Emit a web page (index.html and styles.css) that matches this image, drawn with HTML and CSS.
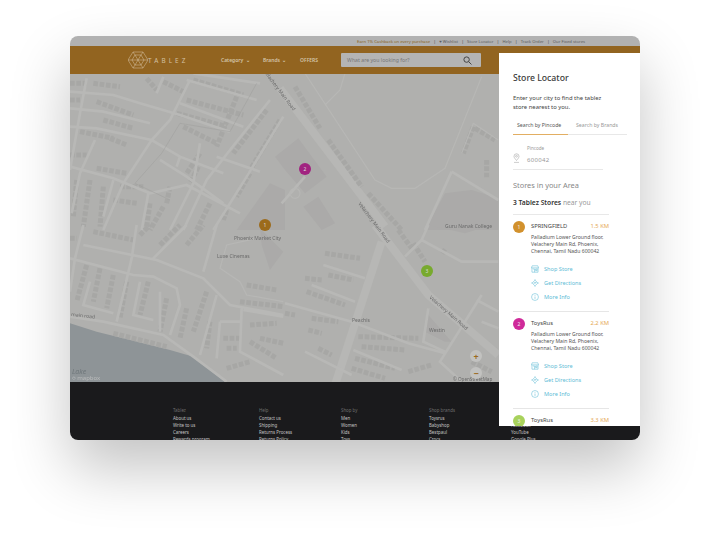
FILE: index.html
```html
<!DOCTYPE html>
<html lang="en">
<head>
  <meta charset="UTF-8" />
  <title>Tablez - Store Locator</title>
  <link rel="stylesheet" href="styles.css">
</head>
<body>
  <div class="card">
    <div class="topbar">
      <span class="cashback">Earn 1% Cashback on every purchase</span><i>|</i>
      <span>&#9829; Wishlist</span><i>|</i>
      <span>Store Locator</span><i>|</i>
      <span>Help</span><i>|</i>
      <span>Track Order</span><i>|</i>
      <span>Our Fixed stores</span>
    </div>

    <header class="nav">
      <svg class="logo" viewBox="0 0 20 18" fill="none" stroke="#d8c7a8" stroke-width=".5">
        <path d="M5 1h10l5 8-5 8H5L0 9z" />
        <path d="M7 4h6l3 5-3 5H7L4 9z" />
        <path d="M5 1l2 3M15 1l-2 3M20 9h-4M15 17l-2-3M5 17l2-3M0 9h4M7 4l6 10M13 4L7 14M4 9h12" />
      </svg>
      <span class="brand">TABLEZ</span>
      <ul class="menu">
        <li class="cat">Category <small>&#8964;</small></li>
        <li class="brd">Brands <small>&#8964;</small></li>
        <li>OFFERS</li>
      </ul>
      <div class="search">
        <span>What are you looking for?</span>
        <svg width="9" height="9" viewBox="0 0 10 10" fill="none" stroke="#444" stroke-width="1.1"><circle cx="4" cy="4" r="3" /><path d="M6.2 6.2L9.4 9.4" /></svg>
      </div>
    </header>

    <div class="map">
      <svg class="mapart" viewBox="70 74 430 308">
        <!-- top left streets -->
        <g transform="translate(70 70) scale(.3333)">
          <path class="block" d="M0 40H50M70 40L150 50M230 25L260 60M280 35L340 65M370 30L520 75M350 90L520 135M320 130L470 170M0 90H30M80 95L190 135M100 150L190 175M30 185L130 205M120 205L170 225M0 255H50M80 295L170 310M340 170L440 220M390 250L350 310M500 80L440 230M590 120L490 250M630 150L540 300M540 310L500 380M385 290L360 340M300 350L290 400M20 330L10 440M60 330L40 470M100 350L90 470M150 350H220M130 390L200 400M240 400L230 470M280 410L240 480M420 400L380 480M470 420L460 450" />
          <path class="road" d="M0 65L130 75L210 100L330 135L480 185M0 115L100 125L240 160M0 170L80 175L245 210L330 260L460 310M0 290L130 325L240 370L350 345L510 430M270 270L350 320L460 400M50 25L30 130L0 300M75 210L30 310L5 430M360 30L300 150L245 210L160 340L100 480M280 20L260 70M130 330L100 440M235 370L215 480M390 220L370 340L300 480M600 90L480 240L410 330L340 480M640 140L530 320L430 480M330 100L520 170M350 30L560 90M370 10L570 40M330 260L320 290M440 260L570 305" />
          <path class="thin" d="M195 340L275 250L330 160L480 185L560 40M195 340L300 390" />
          <path class="lot" d="M600 340L645 360V480H500Z" />
        </g>
        <!-- park and mall -->
        <g transform="translate(285 70) scale(.3333)">
          <path class="lot" d="M40 205L125 320L60 370L0 300L-30 260ZM55 410L100 380L150 460L110 480ZM480 370L560 360L640 385V480H420Z" />
          <path class="main" d="M-15 55L300 470" />
          <path class="block" d="M30 50L105 175M130 210L230 350M250 370L350 480M565 170L535 250M570 175L630 210M605 270V325" />
          <path class="road" d="M500 305L640 390M500 305L420 480M60 320L-10 400" />
          <path class="thinlight" d="M60 10L270 330L320 355H390L480 295L590 20M120 105L165 60L180 10M565 160L530 250M565 160L640 210" />
          <circle class="thinlight" cx="30" cy="370" r="15" />
        </g>
        <!-- bottom left, lake shore -->
        <g transform="translate(70 225) scale(.3333)">
          <path class="water" d="M0 295L80 320L180 345L300 375L370 395L470 475H0Z" />
          <path class="lot" d="M570 10L640 80L600 135L575 60Z" />
          <path class="block" d="M70 20L190 45M210 30L240 0M270 60L330 0M350 60L400 0M0 40H20M50 120L20 230M90 130L70 230M130 150L110 250M170 170L150 280M235 170L210 270M290 220L270 320M350 250L330 340M410 200L370 320M420 290L410 370M130 325L290 365M460 340H510M470 370H500M540 350L620 400M570 340L640 355M470 430L540 410M510 230L640 245M530 180L620 195M540 300L620 295" />
          <path class="road" d="M0 100L190 150L250 155L320 190L330 240L300 330M40 60L260 105L400 160L480 240L640 270M40 0L15 100L0 200M200 0L185 100L140 290M350 0L250 100M440 0L400 140M440 210L390 390M0 275L100 290L280 330L370 395L470 470M270 200V320M210 170L190 270L250 285M60 170L40 240L130 265M450 290L440 400M515 250L510 380L640 450M450 290H510M520 255L640 275" />
          <path class="thinlight" d="M560 40L470 60L450 130L510 170L530 210L640 230" />
        </g>
        <!-- bottom right -->
        <g transform="translate(285 225) scale(.3333)">
          <path class="lot" d="M430 270L500 350L480 350L420 320ZM430 0L620 0L540 25Z" />
          <path class="main" d="M290 50L150 480" />
          <path class="main" d="M270 0L430 210L640 390" />
          <path class="block" d="M120 85L225 100M130 150L205 165M60 160L110 165M65 200L180 240M0 265L30 270M80 280L160 290M70 315L110 325M220 335L400 340M230 365L360 375M100 370L140 390M210 400L330 430M200 430L300 460M385 55L420 110M340 15L380 70M470 75L485 85M370 440L440 420M560 410L620 440" />
          <path class="road" d="M115 120L240 160M80 180L210 230M0 235L200 290L370 355L480 385M60 380L200 450M205 375L350 435M430 250L415 350L480 380M590 210L465 410L530 470M410 45L530 110H640M640 260L575 225M590 290L640 310M430 0L410 45L360 95" />
        </g>

        <g class="labels">
          <text transform="translate(293 111) rotate(53)" text-anchor="end">Velachery Main Road</text>
          <text transform="translate(358 204) rotate(53)">Velachery Main Road</text>
          <text transform="translate(429 298) rotate(41)">Velachery Main Road</text>
          <text x="445" y="228">Guru Nanak College</text>
          <text x="234" y="240">Phoenix Market City</text>
          <text x="217" y="258">Luxe Cinemas</text>
          <text x="352" y="322">Peachis</text>
          <text x="429" y="332">Westin</text>
          <text transform="translate(71 316) rotate(6)">main road</text>
          <text class="lake" x="72" y="374">Lake</text>
          <text class="credit" x="453" y="381">© OpenStreetMap</text>
        </g>
      </svg>

      <span class="pin pin-1">1</span>
      <span class="pin pin-2">2</span>
      <span class="pin pin-3">3</span>

      <div class="attrib"><b>&#9675;</b> mapbox</div>
      <div class="zoomctl">
        <span class="plus">+</span>
        <span class="minus">&#8722;</span>
      </div>
    </div>

    <footer class="foot">
      <div>
        <h5>Tablez</h5>
        <a>About us</a><a>Write to us</a><a>Careers</a><a>Rewards program</a>
      </div>
      <div>
        <h5>Help</h5>
        <a>Contact us</a><a>Shipping</a><a>Returns Process</a><a>Returns Policy</a>
      </div>
      <div>
        <h5>Shop by</h5>
        <a>Men</a><a>Women</a><a>Kids</a><a>Toys</a>
      </div>
      <div>
        <h5>Shop brands</h5>
        <a>Toysrus</a><a>Babyshop</a><a>Bestpaul</a><a>Crocs</a>
      </div>
      <div class="social">
        <a>Facebook</a><a>YouTube</a><a>Google Plus</a>
      </div>
    </footer>

    <aside class="panel">
      <h2>Store Locator</h2>
      <p class="intro">Enter your city to find the tablez store nearest to you.</p>
      <div class="tabs">
        <span class="on">Search by Pincode</span>
        <span>Search by Brands</span>
      </div>
      <div class="pincode">
        <svg width="7" height="10" viewBox="0 0 7 10" fill="none" stroke="#aaa" stroke-width=".6"><path d="M3.5 7.5C2 5.6 1 4.6 1 3.3a2.5 2.5 0 0 1 5 0C6 4.6 5 5.6 3.5 7.5z" /><circle cx="3.5" cy="3.3" r=".9" /><path d="M1 9.4h5" /></svg>
        <div>
          <label>Pincode</label>
          <div class="val">600042</div>
        </div>
      </div>
      <h3>Stores in your Area</h3>
      <p class="count"><b>3 Tablez Stores</b> near you</p>

      <div class="store">
        <span class="num num-1">1</span>
        <div class="store-body">
          <div class="store-head"><span>SPRINGFIELD</span><em>1.5 KM</em></div>
          <p>Palladium Lower Ground floor, Velachery Main Rd, Phoenix, Chennai, Tamil Nadu 600042</p>
          <ul class="links">
            <li><svg viewBox="0 0 10 10"><use href="#ic-shop" /></svg>Shop Store</li>
            <li><svg viewBox="0 0 10 10"><use href="#ic-dir" /></svg>Get Directions</li>
            <li><svg viewBox="0 0 10 10"><use href="#ic-info" /></svg>More Info</li>
          </ul>
        </div>
      </div>

      <div class="store">
        <span class="num num-2">2</span>
        <div class="store-body">
          <div class="store-head"><span>ToysRus</span><em>2.2 KM</em></div>
          <p>Palladium Lower Ground floor, Velachery Main Rd, Phoenix, Chennai, Tamil Nadu 600042</p>
          <ul class="links">
            <li><svg viewBox="0 0 10 10"><use href="#ic-shop" /></svg>Shop Store</li>
            <li><svg viewBox="0 0 10 10"><use href="#ic-dir" /></svg>Get Directions</li>
            <li><svg viewBox="0 0 10 10"><use href="#ic-info" /></svg>More Info</li>
          </ul>
        </div>
      </div>

      <div class="store">
        <span class="num num-3">3</span>
        <div class="store-body">
          <div class="store-head"><span>ToysRus</span><em>3.3 KM</em></div>
        </div>
      </div>
    </aside>
  </div>

  <svg class="defs" width="0" height="0">
    <symbol id="ic-shop" viewBox="0 0 10 10">
      <path d="M1.5 1h7l1 2.6H.5zM1.2 3.6V9h7.6V3.6M2.5 5h2v4M5.8 5h1.8v2H5.8z" />
    </symbol>
    <symbol id="ic-dir" viewBox="0 0 10 10">
      <path d="M5 1.4L8.6 5 5 8.6 1.4 5zM3.8 6V4.6h2.4M5.4 3.6l1 1-1 1M5 .2v1.2M5 8.6v1.2M.2 5h1.2M8.6 5h1.2" />
    </symbol>
    <symbol id="ic-info" viewBox="0 0 10 10">
      <circle cx="5" cy="5" r="4.3" />
      <path d="M5 4.4v3M5 2.6v.9" />
    </symbol>
  </svg>
</body>
</html>
```
FILE: styles.css
```css
body {
  margin: 0;
  min-height: 545px;
  background-color: #fff;
  font-family: "Noto Sans", "Open Sans", sans-serif;
  color: #333;
  overflow: hidden;
}

.card {
  position: relative;
  width: 570px;
  height: 404px;
  margin: 0 0 0 70px;
  top: 36px;
  border-radius: 8px;
  overflow: hidden;
  display: flex;
  flex-direction: column;
  box-shadow: 0 28px 60px rgba(0, 0, 0, .24);
}

.defs {
  position: absolute;
}

/* top strip */
.topbar {
  height: 10px;
  flex: none;
  background-color: #b1b1b1;
  display: flex;
  align-items: center;
  justify-content: flex-end;
  gap: 2.4px;
  padding-right: 55px;
  font-size: 4.2px;
  color: #5c5c5c;
  white-space: nowrap;
}

.topbar i {
  font-style: normal;
  margin: 0 1px;
  color: #444;
}

.cashback {
  color: #8a6420;
}

/* brown nav */
.nav {
  height: 28px;
  flex: none;
  background-color: #926420;
  display: flex;
  align-items: center;
  padding-left: 58px;
  color: #d4c4a9;
}

.logo {
  width: 20px;
  height: 18px;
}

.brand {
  width: 73px;
  font-size: 6.4px;
  letter-spacing: 3.1px;
  color: #d3c0a0;
}

.menu {
  list-style: none;
  display: flex;
  margin: 0;
  padding: 0;
  font-size: 5px;
  font-weight: 600;
}

.menu li {
  white-space: nowrap;
}

.menu .cat {
  width: 42px;
}

.menu .brd {
  width: 37px;
}

.menu small {
  font-size: 5px;
  margin-left: 1px;
}

.search {
  margin-left: 23px;
  width: 140px;
  height: 14px;
  box-sizing: border-box;
  padding: 0 9px 0 6px;
  background-color: #b4b4b4;
  border-radius: 1px;
  display: flex;
  align-items: center;
  justify-content: space-between;
  font-size: 5.2px;
  color: #777;
}

/* map */
.map {
  position: relative;
  height: 308px;
  flex: none;
  background-color: #b0b0ae;
  overflow: hidden;
}

.mapart {
  position: absolute;
  left: 0;
  top: 0;
  width: 430px;
  height: 308px;
  filter: blur(.5px);
}

.road {
  fill: none;
  stroke: #b8b8b6;
  stroke-width: 8;
}

.main {
  fill: none;
  stroke: #b7b7b5;
  stroke-width: 24;
}

.block {
  fill: none;
  stroke: #a7a7a5;
  stroke-width: 15;
  stroke-dasharray: 14 5;
}

.lot {
  fill: #abaaa9;
}

.water {
  fill: #8e9497;
}

.thin {
  fill: none;
  stroke: #9e9e9c;
  stroke-width: 1.5;
}

.thinlight {
  fill: none;
  stroke: #b7b7b5;
  stroke-width: 3.5;
}

.labels text {
  font-size: 5px;
  fill: #6a6a6a;
}

.labels .lake {
  font-size: 7px;
  font-style: italic;
  fill: #6f777b;
}

.labels .credit {
  font-size: 4.6px;
}

.pin {
  position: absolute;
  width: 12px;
  height: 12px;
  border-radius: 50%;
  display: flex;
  align-items: center;
  justify-content: center;
  font-size: 5px;
  color: #ddd;
}

.pin-1 {
  left: 189px;
  top: 145px;
  background-color: #9c6b1c;
}

.pin-2 {
  left: 229px;
  top: 89px;
  background-color: #a12380;
}

.pin-3 {
  left: 351px;
  top: 191px;
  background-color: #78aa2e;
}

.attrib {
  position: absolute;
  left: 2px;
  bottom: 0;
  font-size: 6px;
  line-height: 8px;
  color: #c8c8c8;
  opacity: .75;
}

.attrib b {
  font-weight: 400;
  color: #eee;
}

.zoomctl {
  position: absolute;
  left: 400px;
  top: 276px;
  display: flex;
  flex-direction: column;
  gap: 5px;
}

.zoomctl span {
  width: 12px;
  height: 12px;
  border-radius: 50%;
  background-color: #c2c2c0;
  color: #9c6b1c;
  display: flex;
  align-items: center;
  justify-content: center;
  font-size: 9px;
  line-height: 1;
  font-weight: 700;
}

/* footer */
.foot {
  flex: 1;
  min-height: 0;
  overflow: hidden;
  background-color: #1a1a1c;
  display: flex;
  padding: 24px 0 0 103px;
  font-size: 4.4px;
  color: #c4c4c4;
}

.foot > div {
  width: 86px;
  flex: none;
}

.foot > div:nth-child(2) {
  width: 82px;
}

.foot > div:nth-child(3) {
  width: 88px;
}

.foot > div:nth-child(4) {
  width: 82px;
}

.foot h5 {
  margin: 0 0 1px;
  font-size: 4.4px;
  font-weight: 400;
  color: #6d6d6d;
  line-height: 8px;
}

.foot a {
  display: block;
  line-height: 7.1px;
}

.foot .social {
  padding-top: 16px;
}

/* side panel */
.panel {
  position: absolute;
  left: 429px;
  top: 17px;
  width: 141px;
  height: 373px;
  box-sizing: border-box;
  background-color: #fff;
  padding: 19px 13px 0 14px;
  overflow: hidden;
}

.panel h2 {
  margin: 0;
  font-size: 8.7px;
  line-height: 12px;
  font-weight: 500;
  color: #3a3a3a;
}

.intro {
  margin: 9.5px 0 0;
  width: 95px;
  font-size: 5.9px;
  line-height: 9px;
  color: #444;
}

.tabs {
  display: flex;
  margin-top: 4.5px;
  height: 18px;
  align-items: center;
  font-size: 5.2px;
  color: #999;
  border-bottom: 1px solid #e8e8e8;
}

.tabs span {
  flex: none;
  padding-left: 8px;
}

.tabs .on {
  width: 51px;
  height: 18px;
  line-height: 18px;
  padding-left: 4px;
  color: #555;
  border-bottom: 1px solid #e2ae62;
}

.pincode {
  display: flex;
  align-items: flex-end;
  gap: 7px;
  width: 90px;
  margin-top: 10px;
  padding-bottom: 4.5px;
  border-bottom: 1px solid #e8e8e8;
}

.pincode svg {
  margin-bottom: 2px;
}

.pincode label {
  display: block;
  font-size: 4.6px;
  line-height: 7px;
  color: #999;
}

.pincode .val {
  margin-top: 3.5px;
  font-size: 6px;
  line-height: 9px;
  color: #999;
  letter-spacing: .3px;
}

.panel h3 {
  margin: 9.5px 0 0;
  font-size: 7.4px;
  line-height: 10px;
  font-weight: 400;
  color: #888;
}

.count {
  margin: 8.8px 0 0;
  font-size: 6.7px;
  line-height: 10px;
  color: #999;
  padding-bottom: 6px;
  border-bottom: 1px solid #e8e8e8;
  width: 96px;
}

.count b {
  color: #333;
  font-weight: 600;
}

.store {
  display: flex;
  width: 96px;
  gap: 6px;
  padding: 5.7px 0 6.6px;
  border-bottom: 1px solid #e6e6e6;
}

.store:last-child {
  border-bottom: 0;
}

.num {
  flex: none;
  width: 12px;
  height: 12px;
  border-radius: 50%;
  display: flex;
  align-items: center;
  justify-content: center;
  font-size: 5px;
  color: #f2f2f2;
}

.num-1 {
  background-color: #d2912d;
}

.num-2 {
  background-color: #cf2a9a;
}

.num-3 {
  background-color: #a8d25c;
}

.store-body {
  flex: 1;
  min-width: 0;
}

.store-head {
  display: flex;
  justify-content: space-between;
  margin-top: 1px;
  font-size: 5.8px;
  line-height: 9px;
  color: #444;
}

.store-head em {
  font-style: normal;
  color: #e5a855;
}

.store p {
  margin: 3px 0 0;
  width: 78px;
  font-size: 5.1px;
  line-height: 7.2px;
  color: #555;
}

.links {
  list-style: none;
  margin: 6px 0 0;
  padding: 0;
}

.links li {
  display: flex;
  align-items: center;
  height: 14.3px;
  font-size: 5.6px;
  color: #62bcd6;
}

.links svg {
  width: 8px;
  height: 8px;
  margin-right: 5px;
  fill: none;
  stroke: #62bcd6;
  stroke-width: .7;
}
```
